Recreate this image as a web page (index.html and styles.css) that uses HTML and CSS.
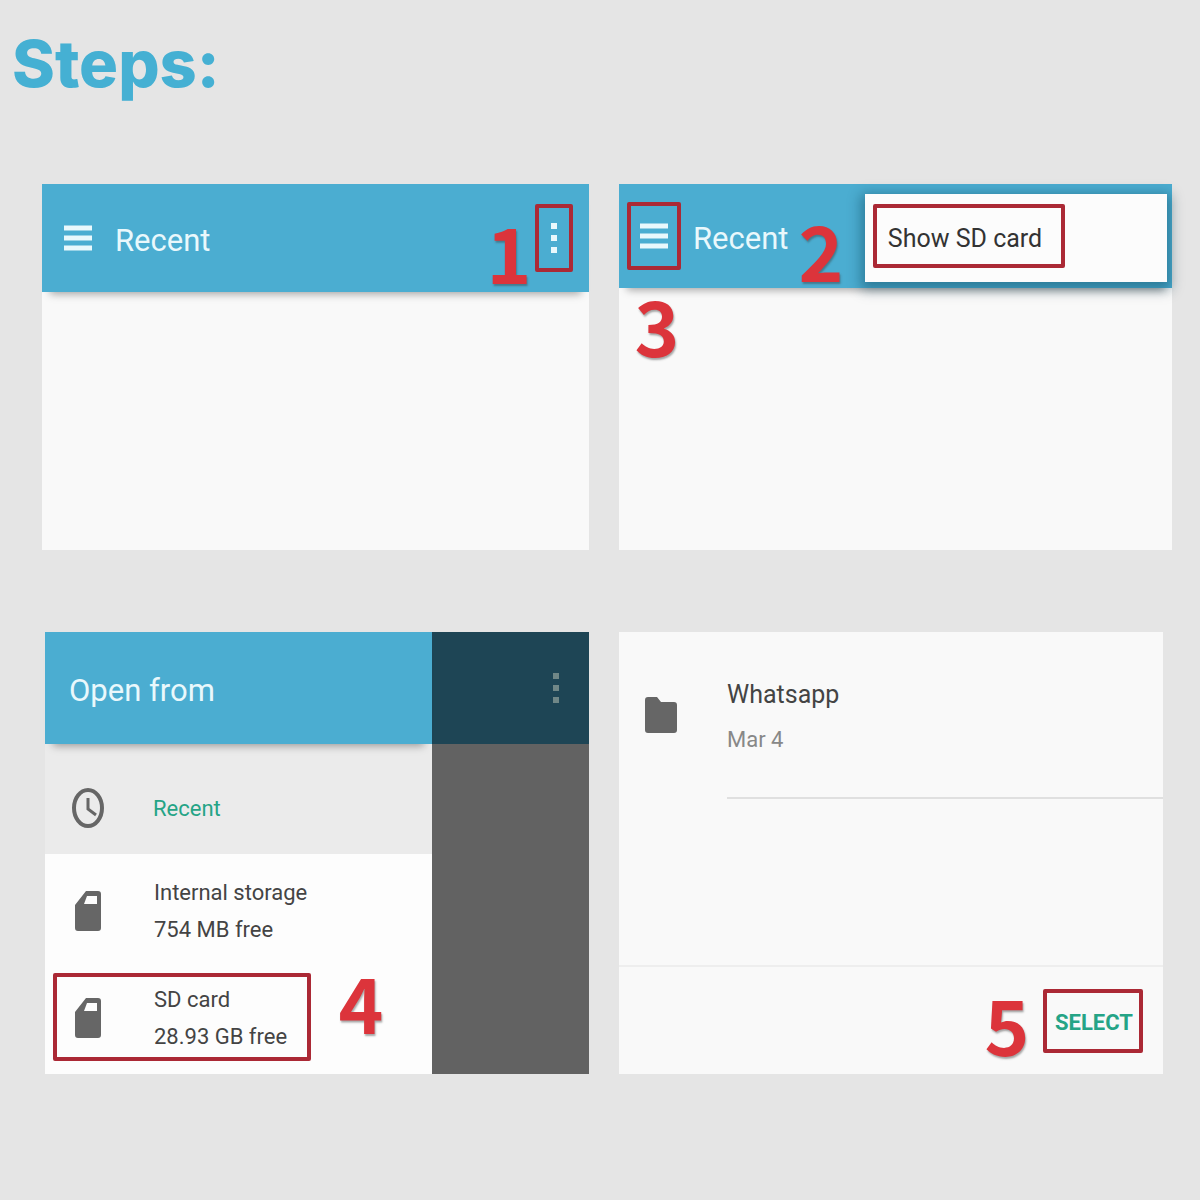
FILE: index.html
```html
<!DOCTYPE html>
<html lang="en">
<head>
<meta charset="utf-8">
<meta name="viewport" content="width=device-width, initial-scale=1">
<title>Steps</title>
<link rel="stylesheet" href="styles.css">
</head>
<body>
<svg class="sprite" aria-hidden="true">
  <symbol id="menu" viewBox="0 0 28 28"><path d="M0 4h28M0 14h28M0 24h28" stroke="currentColor" stroke-width="5"/></symbol>
  <symbol id="more" viewBox="0 0 8 32"><path d="M1 1h6v6H1zM1 13h6v6H1zM1 25h6v6H1z" fill="currentColor"/></symbol>
  <symbol id="card" viewBox="0 0 26 42"><path fill-rule="evenodd" d="M11 1h12q3 0 3 3v34q0 3-3 3H3q-3 0-3-3V15zM12 6l-3 8h13V6z" fill="currentColor"/></symbol>
</svg>
<main class="page">
  <h1 class="title">Steps:</h1>
  <div class="steps">
    <section class="panel">
      <header class="bar">
        <button class="icon-button" aria-label="Menu"><svg class="menu"><use href="#menu"/></svg></button>
        <h2 class="bar-title">Recent</h2>
        <span class="number push">1</span>
        <button class="icon-button marked marked-more" aria-label="More options"><svg class="more"><use href="#more"/></svg></button>
      </header>
    </section>

    <section class="panel">
      <header class="bar bar-popup">
        <button class="icon-button marked marked-menu" aria-label="Menu"><svg class="menu"><use href="#menu"/></svg></button>
        <h2 class="bar-title">Recent</h2>
        <span class="number">2</span>
        <div class="popup"><button class="marked popup-item">Show SD card</button></div>
      </header>
      <span class="number number-below">3</span>
    </section>

    <section class="panel drawer-panel">
      <div class="drawer">
        <header class="bar bar-drawer"><h2 class="bar-title">Open from</h2></header>
        <ul class="places">
          <li class="place place-active">
            <svg class="clock" viewBox="0 0 34 42"><ellipse cx="17" cy="21" rx="14" ry="18" fill="none" stroke="currentColor" stroke-width="4"/><path d="M17 11v11l8 6" fill="none" stroke="currentColor" stroke-width="3"/></svg>
            <a class="place-text" href="#recent">Recent</a>
          </li>
          <li class="place">
            <svg class="card"><use href="#card"/></svg>
            <a class="place-text" href="#internal">Internal storage<br>754 MB free</a>
          </li>
          <li class="place place-last">
            <div class="marked marked-place">
              <svg class="card"><use href="#card"/></svg>
              <a class="place-text" href="#sd">SD card<br>28.93 GB free</a>
            </div>
            <span class="number">4</span>
          </li>
        </ul>
      </div>
      <div class="scrim"><div class="scrim-bar"><svg class="more"><use href="#more"/></svg></div></div>
    </section>

    <section class="panel files-panel">
      <div class="file">
        <svg class="folder" viewBox="0 0 32 38"><path d="M3 1h9l4 5h13q3 0 3 3v25q0 3-3 3H3q-3 0-3-3V4q0-3 3-3z" fill="currentColor"/></svg>
        <div class="file-text"><h2 class="file-name">Whatsapp</h2><p class="file-date">Mar 4</p></div>
      </div>
      <footer class="actions">
        <span class="number">5</span>
        <button class="marked select">SELECT</button>
      </footer>
    </section>
  </div>
</main>
</body>
</html>
```
FILE: styles.css
```css
* { box-sizing: border-box; }
body {
  margin: 0;
  min-height: 100vh;
  background: #e5e5e5;
  color: #444;
  font-family: Roboto, sans-serif;
}
h1, h2, p, ul { margin: 0; padding: 0; }
button { margin: 0; padding: 0; border: 0; background: none; color: inherit; font: inherit; }
svg { display: block; flex: none; }
.sprite { position: absolute; width: 0; height: 0; }

.page { padding: 24px 28px 48px 42px; }
.title {
  margin: 0 0 80px -30px;
  color: #45b0d3;
  font: 800 65px/80px Inter, sans-serif;
}
.steps {
  display: grid;
  grid-template-columns: 547fr 553fr;
  grid-template-rows: minmax(366px, auto) minmax(442px, auto);
  gap: 82px 30px;
}
.panel { position: relative; background: #f9f9f9; }

.bar {
  position: relative;
  display: flex;
  align-items: center;
  height: 108px;
  padding: 0 16px 0 22px;
  background: #4badd1;
  color: #e9f8fc;
  box-shadow: 0 10px 8px -8px rgba(0, 0, 0, .35);
}
.bar-title { padding-top: 6px; font-size: 31px; font-weight: 400; line-height: 40px; white-space: nowrap; }
.menu { width: 28px; height: 28px; }
.more { width: 8px; height: 32px; }
.bar .bar-title { margin-left: 23px; }
.push { margin-left: auto; }

.marked { border: 4px solid #ab2935; border-radius: 2px; }
.icon-button { display: flex; align-items: center; justify-content: center; }
.marked-more { width: 38px; height: 68px; margin-left: 8px; }
.marked-menu { width: 54px; height: 68px; }

.number {
  display: flex;
  justify-content: center;
  width: 36px;
  color: #dc343b;
  font-family: "Noto Sans CJK SC", sans-serif;
  font-size: 76px;
  font-weight: 700;
  line-height: 60px;
  text-shadow: 1px 2px 2px rgba(60, 60, 60, .45);
}
.bar .number { padding-top: 26px; }

.bar-popup { height: 104px; padding: 0 5px 0 8px; }
.bar-popup .bar-title { width: 96px; margin-left: 12px; }
.bar-popup .number { margin: 0 26px 0 14px; }
.popup {
  flex: 1;
  height: 88px;
  margin-top: 4px;
  padding: 10px 8px;
  background: #fcfcfc;
  box-shadow: 0 4px 12px 4px rgba(0, 50, 70, .4);
}
.popup-item { width: 192px; height: 64px; padding: 4px 8px 0 0; font-size: 25px; white-space: nowrap; color: #333; }
.number-below { position: absolute; left: 20px; top: 110px; }

.drawer-panel { display: flex; margin-left: 3px; background: #fdfdfd; }
.drawer { flex: 387; }
.bar-drawer { height: 112px; }
.bar-drawer .bar-title { margin-left: 2px; }
.places { list-style: none; }
.place { display: flex; align-items: center; height: 110px; padding: 4px 0 0 30px; }
.place-active { padding: 18px 0 0 26px; background: #ebebeb; color: #666; }
.place-text { margin-left: 53px; color: #444; font-size: 22px; line-height: 37px; text-decoration: none; white-space: nowrap; }
.place-active .place-text { margin-left: 48px; color: #25a486; }
.clock { width: 34px; height: 42px; }
.card { width: 26px; height: 42px; color: #666; }
.place-last { padding: 0 0 4px 8px; }
.marked-place { display: flex; align-items: center; width: 258px; height: 88px; padding: 2px 0 0 18px; }
.place-last .number { margin: -32px 0 0 32px; }
.scrim { flex: 157; background: #626262; }
.scrim-bar { display: flex; align-items: center; justify-content: flex-end; height: 112px; padding-right: 29px; background: #1e4555; color: #708787; }

.files-panel { display: flex; flex-direction: column; justify-content: space-between; margin-right: 9px; }
.file { display: flex; align-items: flex-start; padding-left: 26px; }
.folder { width: 32px; height: 38px; margin-top: 64px; color: #666; }
.file-text { flex: 1; height: 167px; margin-left: 50px; padding-top: 40px; border-bottom: 2px solid #e0e0e0; }
.file-name { color: #444; font-size: 25px; font-weight: 400; line-height: 46px; }
.file-date { color: #888; font-size: 22px; line-height: 44px; }
.actions { display: flex; align-items: center; justify-content: flex-end; height: 109px; padding-right: 20px; border-top: 2px solid #eee; }
.actions .number { margin: 4px 18px 0 0; }
.select { width: 100px; height: 64px; padding: 4px 0 0 2px; color: #25a486; font-size: 22px; font-weight: 700; text-align: center; }
```
